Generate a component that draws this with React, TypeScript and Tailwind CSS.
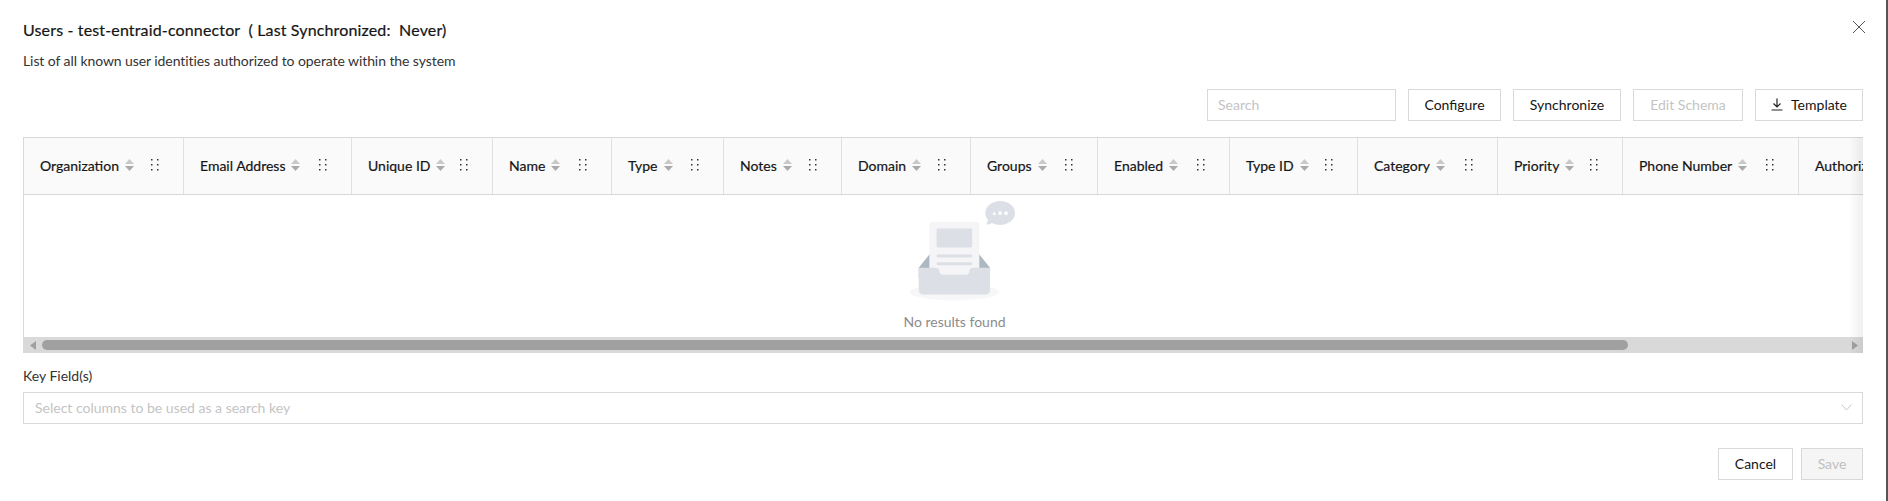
import React from 'react';

const columns = [
  { name: 'Organization', width: 'w-[160px]' },
  { name: 'Email Address', width: 'w-[168px]' },
  { name: 'Unique ID', width: 'w-[141px]' },
  { name: 'Name', width: 'w-[119px]' },
  { name: 'Type', width: 'w-[112px]' },
  { name: 'Notes', width: 'w-[118px]' },
  { name: 'Domain', width: 'w-[129px]' },
  { name: 'Groups', width: 'w-[127px]' },
  { name: 'Enabled', width: 'w-[132px]' },
  { name: 'Type ID', width: 'w-[128px]' },
  { name: 'Category', width: 'w-[140px]' },
  { name: 'Priority', width: 'w-[125px]' },
  { name: 'Phone Number', width: 'w-[176px]' },
  { name: 'Authorized', width: 'w-[190px]' },
];

function SortIcon() {
  return (
    <svg width="9" height="12" viewBox="0 0 9 12" className="shrink-0">
      <path d="M4.5 0 L9 5 L0 5 Z" fill="#c9c9c9" />
      <path d="M4.5 12 L9 7 L0 7 Z" fill="#aaaaaa" />
    </svg>
  );
}

function DragIcon() {
  return (
    <svg width="8" height="12" viewBox="0 0 8 12" className="shrink-0" fill="#333">
      <rect x="0" y="0" width="1.5" height="1.5" />
      <rect x="6" y="0" width="1.5" height="1.5" />
      <rect x="0" y="5" width="1.5" height="1.5" />
      <rect x="6" y="5" width="1.5" height="1.5" />
      <rect x="0" y="10" width="1.5" height="1.5" />
      <rect x="6" y="10" width="1.5" height="1.5" />
    </svg>
  );
}

function EmptyImage() {
  return (
    <svg width="121" height="100" viewBox="0 0 184 152">
      <g fill="none" fillRule="evenodd">
        <g transform="translate(24 31.67)">
          <ellipse fillOpacity=".8" fill="#F5F5F7" cx="67.797" cy="106.89" rx="67.797" ry="12.668" />
          <path d="M122.034 69.674L98.109 40.229c-1.148-1.386-2.826-2.225-4.593-2.225h-51.44c-1.766 0-3.444.839-4.592 2.225L13.56 69.674v15.383h108.475V69.674z" fill="#AEB8C2" />
          <path d="M101.537 86.214L80.63 61.102c-1.001-1.207-2.507-1.867-4.048-1.867H31.724c-1.54 0-3.047.66-4.048 1.867L6.769 86.214v13.792h94.768V86.214z" fill="#E8EBEF" transform="translate(13.56)" />
          <path d="M33.83 0h67.933a4 4 0 0 1 4 4v93.344a4 4 0 0 1-4 4H33.83a4 4 0 0 1-4-4V4a4 4 0 0 1 4-4z" fill="#F5F5F7" />
          <path d="M42.678 9.953h50.237a2 2 0 0 1 2 2V36.91a2 2 0 0 1-2 2H42.678a2 2 0 0 1-2-2V11.953a2 2 0 0 1 2-2zM42.94 49.767h49.713a2.262 2.262 0 1 1 0 4.524H42.94a2.262 2.262 0 0 1 0-4.524zM42.94 61.53h49.713a2.262 2.262 0 1 1 0 4.525H42.94a2.262 2.262 0 0 1 0-4.525zM121.813 105.032c-.775 3.071-3.497 5.36-6.735 5.36H20.515c-3.238 0-5.96-2.29-6.734-5.36a7.309 7.309 0 0 1-.222-1.79V69.675h26.318c2.907 0 5.25 2.448 5.25 5.42v.04c0 2.971 2.37 5.37 5.277 5.37h34.785c2.907 0 5.277-2.421 5.277-5.393V75.1c0-2.972 2.343-5.426 5.25-5.426h26.318v33.569c0 .617-.077 1.216-.221 1.789z" fill="#DCE0E6" />
        </g>
        <path d="M149.121 33.292l-6.83 2.65a1 1 0 0 1-1.317-1.23l1.937-6.207c-2.589-2.944-4.109-6.534-4.109-10.408C138.802 8.102 148.92 0 161.402 0 173.881 0 184 8.102 184 18.097c0 9.995-10.118 18.097-22.599 18.097-4.528 0-8.744-1.066-12.28-2.902z" fill="#DCE0E6" />
        <g transform="translate(149.65 15.383)" fill="#FFF">
          <ellipse cx="20.654" cy="3.167" rx="2.849" ry="2.815" />
          <path d="M5.698 5.63H0L2.898.704zM9.259.704h4.985V5.63H9.259z" />
        </g>
      </g>
    </svg>
  );
}

export default function App() {
  return (
    <div className="relative h-[501px] w-full bg-white border-r-2 border-[#555] pl-[23px] pr-[23px] font-['Lato',sans-serif] text-[#151515] overflow-hidden">
      {/* Close */}
      <svg width="14" height="14" viewBox="0 0 14 14" className="absolute top-[20px] left-[1852px]" stroke="#555" strokeWidth="1" fill="none">
        <path d="M1 1 L13 13 M13 1 L1 13" />
      </svg>

      {/* Title */}
      <div className="pt-[19px]">
        <h1 className="text-[16px] leading-[22px] tracking-[0.15px] [-webkit-text-stroke:0.2px]">Users - test-entraid-connector&nbsp; ( Last Synchronized:&nbsp; Never)</h1>
        <p className="mt-[10px] text-[14px] leading-[20px] tracking-[-0.08px] text-[#333]">List of all known user identities authorized to operate within the system</p>
      </div>

      {/* Toolbar */}
      <div className="mt-[18px] flex justify-end gap-[12px] h-[32px] text-[14px]">
        <input
          placeholder="Search"
          className="w-[189px] border border-[#d9d9d9] px-[10px] pb-[2px] outline-none placeholder:text-[#c4c4c4]"
        />
        <button className="w-[93px] border border-[#d9d9d9] bg-white pb-[2px]">Configure</button>
        <button className="w-[108px] border border-[#d9d9d9] bg-white pb-[2px]">Synchronize</button>
        <button className="w-[110px] border border-[#d9d9d9] bg-white pb-[2px] text-[#c4c4c4]">Edit Schema</button>
        <button className="w-[108px] border border-[#d9d9d9] bg-white pb-[2px] flex items-center justify-center gap-[8px]">
          <svg width="12" height="13" viewBox="0 0 12 13" fill="none" stroke="#222" strokeWidth="1.2">
            <path d="M6 0.5 V8.5 M2.5 5.5 L6 9 L9.5 5.5 M0.5 12 H11.5" />
          </svg>
          Template
        </button>
      </div>

      {/* Table */}
      <div className="relative mt-[16px] overflow-hidden border-l border-[#d9d9d9]">
        <div className="flex h-[58px] w-max border-y border-[#d9d9d9] bg-[#fafafa]">
          {columns.map((col) => (
            <div key={col.name} className={`${col.width} shrink-0 flex items-center pl-[16px] pr-[24px] pb-[2px] border-r border-[#e0e0e0] text-[14px] [-webkit-text-stroke:0.2px]`}>
              <span>{col.name}</span>
              <span className="ml-[6px]"><SortIcon /></span>
              <span className="ml-auto"><DragIcon /></span>
            </div>
          ))}
        </div>
        <div className="h-[142px] flex flex-col items-center pl-[22px] pt-[6px]">
          <EmptyImage />
          <span className="mt-[10px] text-[14px] text-[#8c8c8c]">No results found</span>
        </div>
        <div className="h-[16px] bg-[#d9d9d9] flex items-center pl-[6px] pr-[5px]">
          <svg width="6" height="9" viewBox="0 0 6 9" fill="#a0a0a0"><path d="M6 0 V9 L0 4.5 Z" /></svg>
          <div className="ml-[6px] h-[10px] w-[1586px] rounded-full bg-[#a0a0a0]" />
          <div className="flex-1" />
          <svg width="6" height="9" viewBox="0 0 6 9" fill="#a0a0a0"><path d="M0 0 V9 L6 4.5 Z" /></svg>
        </div>
        <div className="absolute right-0 top-0 bottom-0 w-[14px] bg-gradient-to-r from-transparent to-[#00000010]" />
      </div>

      {/* Key fields */}
      <label className="block mt-[13px] text-[14px] leading-[20px] text-[#333]">Key Field(s)</label>
      <div className="mt-[6px] h-[32px] border border-[#d9d9d9] flex items-center justify-between pl-[11px] pr-[10px] pb-[2px] text-[14px] text-[#c4c4c4]">
        <span>Select columns to be used as a search key</span>
        <svg width="11" height="7" viewBox="0 0 11 7" fill="none" stroke="#c0c0c0" strokeWidth="0.9"><path d="M0.5 0.5 L5.5 6 L10.5 0.5" /></svg>
      </div>

      {/* Footer */}
      <div className="mt-[24px] flex justify-end gap-[8px] h-[32px] text-[14px]">
        <button className="w-[75px] border border-[#d9d9d9] bg-white pb-[2px]">Cancel</button>
        <button className="w-[62px] border border-[#d9d9d9] bg-[#f5f5f5] pb-[2px] text-[#bfbfbf]">Save</button>
      </div>
    </div>
  );
}
